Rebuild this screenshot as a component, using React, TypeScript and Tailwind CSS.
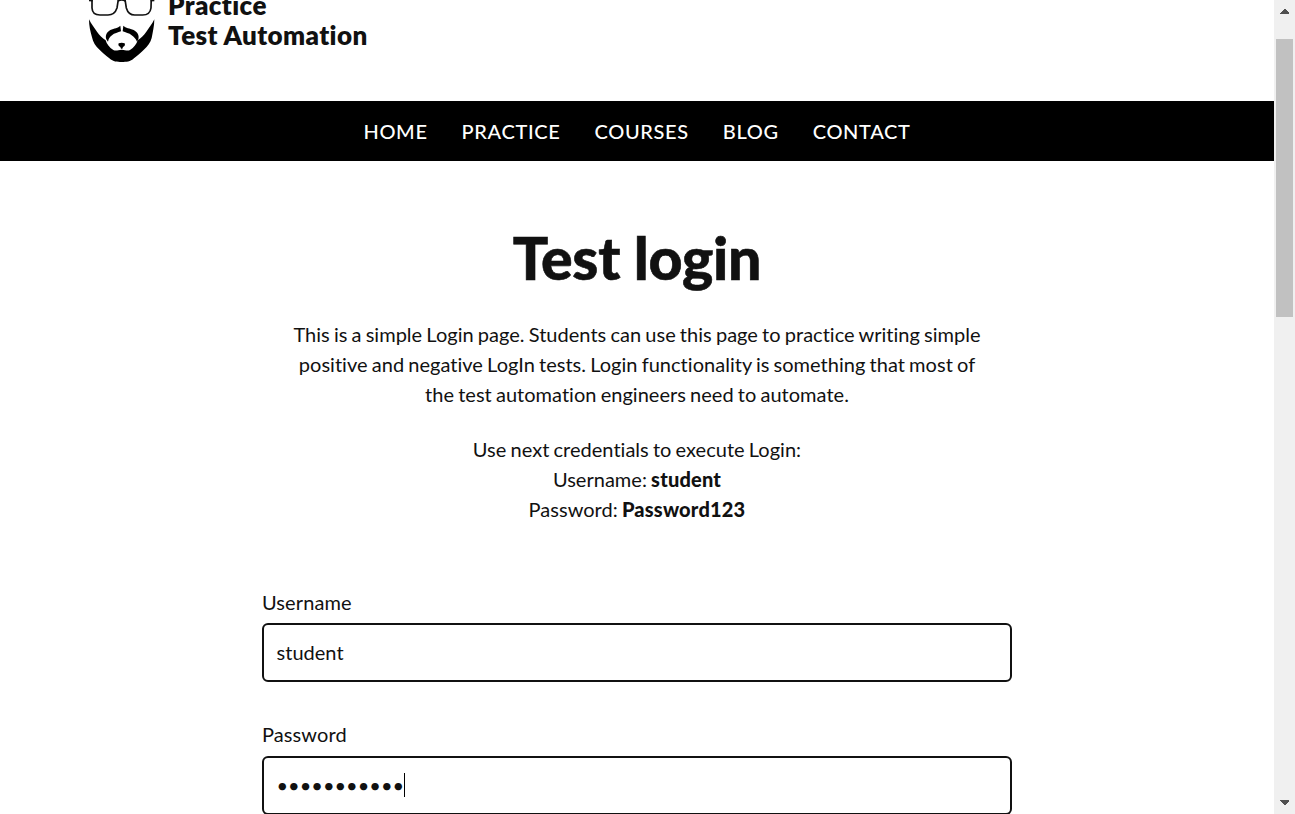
import React from "react";

const links = ["HOME", "PRACTICE", "COURSES", "BLOG", "CONTACT"];

function Beard() {
  return (
    <svg width="85" height="70" viewBox="0 0 255 210" className="shrink-0">
      <g fill="none" stroke="#111" strokeWidth="5">
        <path d="M36 -12 L36 24 Q37 45 60 45 L84 45 Q104 45 111 24 L116 -8" />
        <path d="M134 -8 L139 24 Q145 45 164 45 L188 45 Q210 45 213 24 L214 -12" />
        <path d="M27 1 L38 2 M212 2 L223 1" strokeWidth="5" />
        <path d="M114 3 Q125 -4 136 3" />
      </g>
      <g fill="#000">
        <path d="M27 58 C34 72 43 84 51 95 C58 106 67 113 77 121 C80 132 88 143 100 150 C109 154 115 149 125 149 C135 149 141 154 150 150 C162 143 170 132 173 121 C183 113 192 106 199 95 C207 84 216 72 223 58 C223 77 218 99 215 114 C212 128 202 139 193 148 C184 157 174 166 162 175 C151 186 139 186 125 186 C111 186 100 186 88 175 C76 166 66 157 57 148 C47 139 39 126 36 112 C31 94 27 78 27 58 Z" />
        <path d="M121 77 L123 94 C114 98 103 99 96 106 C89 111 86 116 84 125 L79 118 C75 108 79 97 91 90 C103 84 114 85 121 77 Z" />
        <path d="M130 77 L128 94 C136 98 148 99 155 106 C162 111 167 116 171 125 L175 118 C178 108 174 97 161 90 C149 84 137 85 130 77 Z" />
        <path d="M116 130 Q125 127 134 130 Q137 138 129 141 L127 146 L123 146 L121 141 Q113 138 116 130 Z" />
      </g>
    </svg>
  );
}

export default function App() {
  return (
    <div className="flex h-[814px] w-[1295px] overflow-hidden bg-white font-['Lato',sans-serif] text-xl leading-[30px] tracking-[0.025px] text-[#111] [font-variant-ligatures:none] [word-spacing:-1px]">
      <div className="flex w-[1274px] shrink-0 flex-col">
        <header className="flex h-[101px] shrink-0 pl-20">
          <Beard />
          <div className="-mt-2.5 ml-[3px] text-[26px] font-extrabold leading-[30px] tracking-[0.4px] [word-spacing:0px]">
            <div>Practice</div>
            <div>Test Automation</div>
          </div>
        </header>
        <nav className="flex h-[60px] shrink-0 items-center justify-center gap-[34px] bg-black font-medium tracking-[0.65px] text-white">
          {links.map((l) => (
            <a key={l} href="#">{l}</a>
          ))}
        </nav>
        <main className="mx-auto w-[750px] shrink-0">
          <h1 className="mt-[59px] text-center text-[59px] font-black leading-[75px] tracking-[-0.3px] [-webkit-text-stroke:0.6px_#111] [word-spacing:0px]">Test login</h1>
          <p className="mt-6 text-center">
            This is a simple Login page. Students can use this page to practice writing simple
            <br />positive and negative LogIn tests. Login functionality is something that most of
            <br />the test automation engineers need to automate.
          </p>
          <p className="mt-[25px] text-center">
            Use next credentials to execute Login:
            <br />Username: <b className="font-black tracking-[0.2px]">student</b>
            <br />Password: <b className="font-black tracking-[0.2px]">Password123</b>
          </p>
          <form className="mt-[63px]">
            <div className="tracking-[0.1px]">Username</div>
            <div className="mt-1.5 flex h-[59px] items-center rounded-md border-2 border-[#111] pb-0.5 pl-[12.5px]">
              student
            </div>
            <div className="mt-[37px] tracking-[0.1px]">Password</div>
            <div className="mt-[7px] flex h-[59px] items-center rounded-md border-2 border-[#111] pb-0.5 pl-[12.5px]">
              <span className="tracking-normal">•••••••••••</span>
              <span className="h-6 w-px bg-black" />
            </div>
          </form>
        </main>
      </div>
      <aside className="flex w-[21px] shrink-0 flex-col items-center bg-[#f0f0f0]">
        <svg width="21" height="39" viewBox="0 0 21 39" shapeRendering="crispEdges" className="shrink-0">
          <path d="M6 14 L6 13 L10 9 L11 9 L15 13 L15 14 Z" fill="#505050" />
        </svg>
        <div className="h-[278px] w-[17px] shrink-0 bg-[#c1c1c1]" />
        <svg width="21" height="17" viewBox="0 0 21 17" shapeRendering="crispEdges" className="mb-1 mt-auto shrink-0">
          <path d="M6 7 L15 7 L15 8 L11 12 L10 12 L6 8 Z" fill="#505050" />
        </svg>
      </aside>
    </div>
  );
}
